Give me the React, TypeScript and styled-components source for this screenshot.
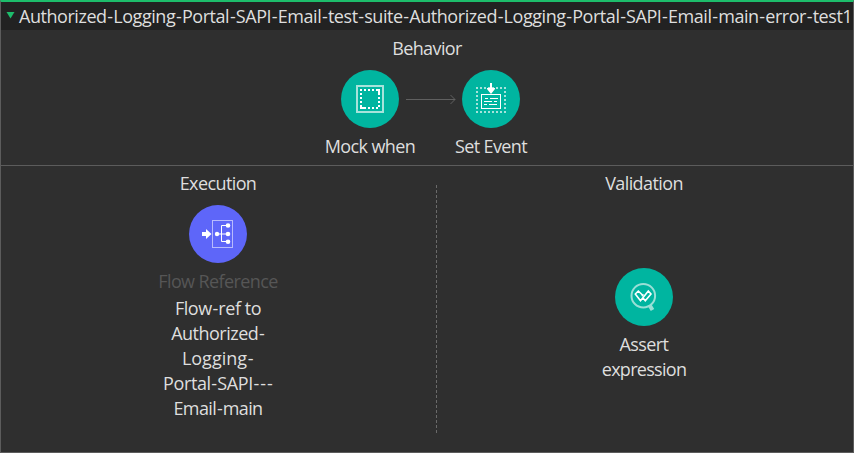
import React, { Fragment } from "react";
import styled, { createGlobalStyle } from "styled-components";

const GlobalStyle = createGlobalStyle`
  * { box-sizing: border-box; }
  body { margin: 0; background: #2f2f2f; }
`;

const Suite = styled.main`
  width: 854px;
  height: 453px;
  display: flex;
  flex-direction: column;
  overflow: hidden;
  background: #2f2f2f;
  border: 1px solid #5c5c5c;
  border-top: 2px solid #1dbd6b;
  color: #dedede;
  font-family: "Open Sans", "Noto Sans", sans-serif;
  font-size: 18px;
  line-height: 25px;
`;

const TitleBar = styled.header`
  height: 28px;
  flex: none;
  display: flex;
  align-items: flex-start;
  gap: 4px;
  padding: 2px 0 0 5px;
  background: #222222;
`;

const Caret = styled.svg`
  flex: none;
  margin-top: 8px;
`;

const Text = styled.span<{ $track: number; $muted?: boolean }>`
  white-space: nowrap;
  letter-spacing: ${(p) => p.$track}px;
  color: ${(p) => (p.$muted ? "#565656" : "inherit")};
`;

const Hyphen = styled.span`
  margin: 0 0.6px 0 0.7px;
`;

const Behavior = styled.section`
  height: 136px;
  flex: none;
  display: flex;
  flex-direction: column;
  align-items: center;
  padding-top: 6px;
  border-bottom: 1px solid #5c5c5c;
`;

const Chain = styled.div`
  display: flex;
  align-items: flex-start;
  margin: 9px 0 0 7px;
`;

const Connector = styled.svg`
  margin: 24px 6px 0 7px;
`;

const Node = styled.div`
  width: 58px;
  display: flex;
  flex-direction: column;
  align-items: center;
`;

const Disc = styled.div<{ $color: string }>`
  width: 58px;
  height: 58px;
  flex: none;
  margin-bottom: 6px;
  border-radius: 50%;
  background: ${(p) => p.$color};
`;

const Lower = styled.div`
  flex: 1;
  display: grid;
  grid-template-columns: 435px 1px 1fr;
`;

const Phase = styled.section<{ $gap: number; $inset: number }>`
  display: flex;
  flex-direction: column;
  align-items: center;
  padding: 5px ${(p) => p.$inset}px 0 0;
  gap: ${(p) => p.$gap}px;
`;

const Divider = styled.div`
  margin: 19px 0 19px;
  background: repeating-linear-gradient(to bottom, #6a6a6a 0 3px, transparent 3px 5px);
`;

const Details = styled.div`
  display: flex;
  flex-direction: column;
  align-items: center;
  margin-top: 2px;
`;

const TEAL = "#00b5a0";
const INDIGO = "#5e66f9";

function Label({ text, track = -0.6, muted }: { text: string; track?: number; muted?: boolean }) {
  return (
    <Text $track={track} $muted={muted}>
      {text.split("-").map((part, i) => (
        <Fragment key={i}>
          {i > 0 && <Hyphen>-</Hyphen>}
          {part}
        </Fragment>
      ))}
    </Text>
  );
}

const MockIcon = () => (
  <svg width="58" height="58" viewBox="0 0 58 58" fill="none" shapeRendering="crispEdges">
    <rect x="16" y="16" width="26" height="26" stroke="#a6e3db" strokeWidth="2" />
    <path d="M19 20H39M19 38H39" stroke="#fff" strokeWidth="2" strokeDasharray="2 2" />
    <path d="M20 23V39M38 23V37" stroke="#fff" strokeWidth="2" strokeDasharray="2 2" />
    <path d="M35 20H38V23M20 35V38H23" stroke="#fff" strokeWidth="2" />
  </svg>
);

const EventIcon = () => (
  <svg width="58" height="58" viewBox="0 0 58 58" fill="none">
    <g shapeRendering="crispEdges">
      <path d="M14 18H45M14 42H45" stroke="#a6e3db" strokeWidth="2" strokeDasharray="2 2" />
      <path d="M15 21V41M43 21V41" stroke="#a6e3db" strokeWidth="2" strokeDasharray="2 2" />
      <rect x="19.5" y="24.5" width="19" height="14" fill={TEAL} stroke="#fff" />
      <path d="M23 28.5H26M28 28.5H36M22 31.5H30M32 31.5H35M22 34.5H25M27 34.5H35" stroke="#fff" />
    </g>
    <path d="M28 13H30V18H33V19L29 24L25 19V18H28Z" fill="#fff" />
  </svg>
);

const FlowIcon = () => (
  <svg width="58" height="58" viewBox="0 0 58 58" fill="none">
    <rect x="23.5" y="15.5" width="20" height="27" stroke="#b8bbfd" />
    <path d="M13 27H17V24L22.5 29L17 34V31H13Z" fill="#fff" />
    <path d="M28 29H39M39 20.5H32.5V36.5H39" stroke="#fff" />
    <circle cx="28" cy="29" r="2.2" fill="#fff" />
    <circle cx="39" cy="20.5" r="2.3" fill="#fff" />
    <circle cx="39" cy="29" r="2.3" fill="#fff" />
    <circle cx="39" cy="36.8" r="2.3" fill="#fff" />
  </svg>
);

const AssertIcon = () => (
  <svg width="58" height="58" viewBox="0 0 58 58" fill="none">
    <circle cx="28.3" cy="27.7" r="11.8" stroke="#99dfd6" strokeWidth="2" />
    <path d="M34.5 37L37.5 42" stroke="#99dfd6" strokeWidth="4" />
    <path d="M28 27.5L23.3 23L20.3 26L25.5 32.8L33.3 23L36 26L30.3 32.8L28 30" stroke="#fff" strokeWidth="1.6" />
    <path d="M26.8 28.3L28.5 26.6" stroke="#fff" strokeWidth="1.4" />
  </svg>
);

export default function App() {
  return (
    <>
      <GlobalStyle />
      <Suite>
        <TitleBar>
          <Caret width="9" height="7" viewBox="0 0 9 7">
            <path d="M0.5 0H8.5L4.5 6.5Z" fill="#1dbd6b" />
          </Caret>
          <Label
            track={-0.45}
            text="Authorized-Logging-Portal-SAPI-Email-test-suite-Authorized-Logging-Portal-SAPI-Email-main-error-test1"
          />
        </TitleBar>
        <Behavior>
          <Label text="Behavior" />
          <Chain>
            <Node>
              <Disc $color={TEAL}><MockIcon /></Disc>
              <Label text="Mock when" />
            </Node>
            <Connector width="50" height="11" viewBox="0 0 50 11" fill="none" stroke="#606060">
              <path d="M0 5.5H49M44.5 1L49 5.5L44.5 10" />
            </Connector>
            <Node>
              <Disc $color={TEAL}><EventIcon /></Disc>
              <Label text="Set Event" />
            </Node>
          </Chain>
        </Behavior>
        <Lower>
          <Phase $gap={9} $inset={1}>
            <Label text="Execution" />
            <Node>
              <Disc $color={INDIGO}><FlowIcon /></Disc>
              <Label muted text="Flow Reference" />
              <Details>
                <Label track={-0.45} text="Flow-ref to" />
                <Label track={-0.5} text="Authorized-" />
                <Label track={0} text="Logging-" />
                <Label track={-0.4} text="Portal-SAPI---" />
                <Label text="Email-main" />
              </Details>
            </Node>
          </Phase>
          <Divider />
          <Phase $gap={72} $inset={2}>
            <Label text="Validation" />
            <Node>
              <Disc $color={TEAL}><AssertIcon /></Disc>
              <Label text="Assert" />
              <Label track={-0.7} text="expression" />
            </Node>
          </Phase>
        </Lower>
      </Suite>
    </>
  );
}
